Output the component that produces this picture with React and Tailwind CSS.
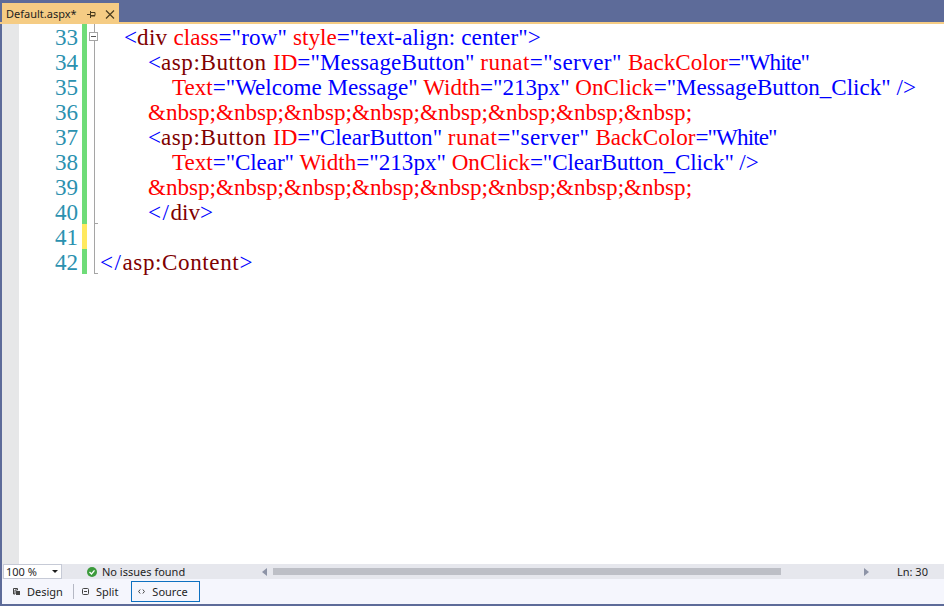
import React from 'react';

const B = 'text-[#0000ff]';
const M = 'text-[#800000]';
const R = 'text-[#ff0000]';
const GREEN = 'bg-[#6fdc78]';

// each line: number, indent in px, change bar colour, coloured runs
// runs carry their own tracking where the hinted widths of the original differ
const lines = [
  { n: 33, indent: 24, bar: GREEN, runs: [[B, '<'], [M + ' tracking-[0.3px]', 'div '], [R, 'class'], [B + ' tracking-[0.15px]', '="row" '], [R, 'style'], [B + ' tracking-[0.1px]', '="text-align: center">']] },
  { n: 34, indent: 48, bar: GREEN, runs: [[B, '<'], [M + ' tracking-[0.55px]', 'asp:Button '], [R, 'ID'], [B + ' tracking-[0.1px]', '="MessageButton" '], [R + ' tracking-[0.4px]', 'runat'], [B + ' tracking-[0.4px]', '="server" '], [R, 'BackColor'], [B + ' tracking-[-0.9px]', '="White"']] },
  { n: 35, indent: 72, bar: GREEN, runs: [[R, 'Text'], [B, '="Welcome Message" '], [R, 'Width'], [B, '="213px" '], [R, 'OnClick'], [B, '="MessageButton_Click" />']] },
  { n: 36, indent: 48, bar: GREEN, runs: [[R, '&nbsp;&nbsp;&nbsp;&nbsp;&nbsp;&nbsp;&nbsp;&nbsp;']] },
  { n: 37, indent: 48, bar: GREEN, runs: [[B, '<'], [M + ' tracking-[0.55px]', 'asp:Button '], [R, 'ID'], [B, '="ClearButton" '], [R + ' tracking-[0.4px]', 'runat'], [B + ' tracking-[0.4px]', '="server" '], [R, 'BackColor'], [B + ' tracking-[-0.9px]', '="White"']] },
  { n: 38, indent: 72, bar: GREEN, runs: [[R, 'Text'], [B + ' tracking-[-0.1px]', '="Clear" '], [R, 'Width'], [B, '="213px" '], [R, 'OnClick'], [B + ' tracking-[-0.13px]', '="ClearButton_Click" />']] },
  { n: 39, indent: 48, bar: GREEN, runs: [[R, '&nbsp;&nbsp;&nbsp;&nbsp;&nbsp;&nbsp;&nbsp;&nbsp;']] },
  { n: 40, indent: 48, bar: GREEN, runs: [[B + ' tracking-[1.5px]', '</'], [M, 'div'], [B, '>']] },
  { n: 41, indent: 0, bar: 'bg-[#ffe95f]', runs: [] },
  { n: 42, indent: 0, bar: GREEN, runs: [[B + ' tracking-[1.5px]', '</'], [M + ' tracking-[0.6px]', 'asp:Content'], [B, '>']] },
];

function CodeLine({ line }) {
  return (
    <div className="flex h-[25px] leading-[27px]">
      <div className="w-[60px] shrink-0 text-right pr-[1px] text-[#2b91af]">{line.n}</div>
      <div className="w-[3px] shrink-0" />
      <div className={`w-[5px] shrink-0 ${line.bar}`} />
      <div className="relative w-[13px] shrink-0">
        <div className="absolute left-[7px] top-0 bottom-0 w-px bg-[#a5a5a5]" />
        {(line.n === 40 || line.n === 42) && <div className="absolute left-[7px] bottom-0 h-px w-[4px] bg-[#a5a5a5]" />}
        {line.n === 33 && (
          <div className="absolute left-[2px] top-[8px] flex h-[9px] w-[9px] items-center justify-center border border-[#a5a5a5] bg-white">
            <div className="h-px w-[5px] bg-[#555555]" />
          </div>
        )}
      </div>
      <div className="whitespace-pre" style={{ paddingLeft: line.indent }}>
        {line.runs.map(([color, text], i) => (
          <span key={i} className={color}>{text}</span>
        ))}
      </div>
    </div>
  );
}

export default function App() {
  return (
    <div className="flex h-[606px] w-[944px] flex-col overflow-hidden bg-[#5d6b99] pb-[2px] pl-[2px] font-['Liberation_Sans',sans-serif]">
      {/* tab well */}
      <div className="flex h-[22px] shrink-0 items-stretch pt-[3px]">
        <div className="flex w-[117px] items-center bg-[#f5cc84] pl-[4px] pt-[3px] text-[11px] text-[#1e1e1e] font-['Noto_Sans',sans-serif]">
          <span>Default.aspx*</span>
          <svg className="ml-[10px]" width="9" height="7" viewBox="0 0 9 7" fill="none" stroke="#4a3c1e">
            <path d="M0 3.5h3.5M3.5 0v7M3.5 1.5h4.5v3h-4.5M3.5 5h4.5" />
          </svg>
          <svg className="ml-[9px]" width="10" height="9" viewBox="0 0 10 9" fill="none" stroke="#4a3c1e" strokeWidth="1.2">
            <path d="M1 0.5l8 8M9 0.5l-8 8" />
          </svg>
        </div>
      </div>
      <div className="-ml-[2px] h-[2px] shrink-0 bg-[#f5cc84]" />

      {/* editor */}
      <div className="flex min-h-0 flex-1 bg-white">
        <div className="w-[17px] shrink-0 bg-[#e6e7e8]" />
        <div className="flex-1 text-[23.1px] font-['Liberation_Serif',serif]">
          {lines.map((line) => (
            <CodeLine key={line.n} line={line} />
          ))}
        </div>
      </div>

      {/* status row */}
      <div className="flex h-[15px] shrink-0 items-center bg-[#e6e7ed] text-[11px] text-[#1e1e1e] font-['Noto_Sans',sans-serif]">
        <div className="ml-px flex h-full w-[59px] items-center justify-between border border-[#c6cad6] bg-white pl-[2px] pr-[3px]">
          <span className="pt-px">100 %</span>
          <span className="h-0 w-0 border-x-[3px] border-t-[3px] border-x-transparent border-t-[#1e1e1e]" />
        </div>
        <svg className="ml-[25px]" width="10" height="10" viewBox="0 0 10 10">
          <circle cx="5" cy="5" r="5" fill="#3c9b3c" />
          <path d="M2.5 5l2 2 3-3.6" fill="none" stroke="#fff" strokeWidth="1.3" />
        </svg>
        <span className="ml-[5px] w-[160px] pt-[2px]">No issues found</span>
        <span className="h-0 w-0 border-y-[4px] border-r-[5px] border-y-transparent border-r-[#8d93a6]" />
        <div className="ml-[6px] h-[7px] w-[508px] bg-[#bdbfc6]" />
        <div className="w-[83px]" />
        <span className="h-0 w-0 border-y-[4px] border-l-[5px] border-y-transparent border-l-[#8d93a6]" />
        <span className="ml-[28px] pt-[2px]">Ln: 30</span>
      </div>

      {/* design / split / source */}
      <div className="flex h-[25px] shrink-0 items-center bg-[#f5f6fd] text-[11px] text-[#1e1e1e] font-['Noto_Sans',sans-serif]">
        <svg className="ml-[11px]" width="7" height="7" viewBox="0 0 7 7">
          <path d="M0.5 0.5h4v1.5h-2.5v4h-1.5z" fill="none" stroke="#444" />
          <rect x="3" y="3" width="4" height="4" fill="#444" />
        </svg>
        <span className="ml-[7px] pt-[2px]">Design</span>
        <div className="ml-[10px] h-[15px] w-px bg-[#b5b8c4]" />
        <svg className="ml-[8px]" width="7" height="7" viewBox="0 0 7 7" fill="none" stroke="#444">
          <rect x="0.5" y="0.5" width="6" height="6" rx="1" />
          <path d="M2 3.5h3" />
        </svg>
        <span className="ml-[7px] pt-[2px]">Split</span>
        <div className="ml-[13px] flex h-[21px] w-[69px] items-center border border-[#0e70c0]">
          <svg className="ml-[6px]" width="7" height="5" viewBox="0 0 7 5" fill="none" stroke="#444">
            <path d="M2.2 0.5L0.6 2.5l1.6 2M4.8 0.5L6.4 2.5l-1.6 2" />
          </svg>
          <span className="ml-[7px] pt-[2px]">Source</span>
        </div>
      </div>
    </div>
  );
}
